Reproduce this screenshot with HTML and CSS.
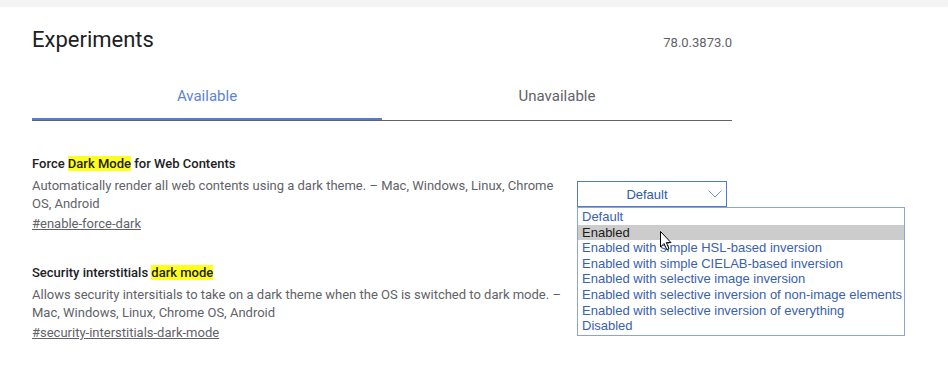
FILE: index.html
```html
<!DOCTYPE html>
<html lang="en">
<head>
  <meta charset="UTF-8" />
  <title>Experiments</title>
  <link rel="stylesheet" href="styles.css">
</head>
<body>
  <div class="top-bar"></div>
  <div class="content">
    <div class="title-row">
      <h1>Experiments</h1>
      <span class="version">78.0.3873.0</span>
    </div>
    <div class="tabs">
      <div class="tab active">Available</div>
      <div class="tab">Unavailable</div>
    </div>

    <div class="experiment first">
      <div class="experiment-text">
        <h2 class="experiment-name">Force <mark>Dark Mode</mark> for Web Contents</h2>
        <p class="description">Automatically render all web contents using a dark theme. – Mac, Windows, Linux, Chrome OS, Android</p>
        <a class="permalink" href="#enable-force-dark">#enable-force-dark</a>
      </div>
      <div class="experiment-control">
        <div class="select">
          <span class="select-value">Default</span>
          <svg class="chevron" width="14" height="8" viewBox="0 0 14 8">
            <path d="M0.5 0.5 L7 7 L13.5 0.5" fill="none" stroke="#7095d2" stroke-width="1"/>
          </svg>
        </div>
        <ul class="options">
          <li>Default</li>
          <li class="hover">Enabled</li>
          <li>Enabled with simple HSL-based inversion</li>
          <li>Enabled with simple CIELAB-based inversion</li>
          <li>Enabled with selective image inversion</li>
          <li>Enabled with selective inversion of non-image elements</li>
          <li>Enabled with selective inversion of everything</li>
          <li>Disabled</li>
        </ul>
        <svg class="cursor" width="13" height="20" viewBox="0 0 13 20">
          <path d="M0.5 0.5 L0.5 16 L4 12.5 L6.8 18.6 L9 17.6 L6.3 11.6 L11 11.6 Z" fill="#fff" stroke="#000" stroke-width="1" stroke-linejoin="round"/>
        </svg>
      </div>
    </div>

    <div class="experiment">
      <div class="experiment-text">
        <h2 class="experiment-name">Security interstitials <mark>dark mode</mark></h2>
        <p class="description">Allows security intersitials to take on a dark theme when the OS is switched to dark mode. – Mac, Windows, Linux, Chrome OS, Android</p>
        <a class="permalink" href="#security-interstitials-dark-mode">#security-interstitials-dark-mode</a>
      </div>
    </div>
  </div>
</body>
</html>
```

FILE: styles.css
```css
body {
  margin: 0;
  background: #fff;
  font-family: Roboto, "Liberation Sans", sans-serif;
  color: #202124;
}
.top-bar {
  height: 6px;
  background: #f4f4f4;
  box-shadow: 0 1px 2px rgba(0, 0, 0, 0.06);
}
.content {
  width: 700px;
  margin-left: 32px;
}
.title-row {
  display: flex;
  justify-content: space-between;
  align-items: baseline;
  margin-top: 20px;
}
h1 {
  margin: 0;
  font-size: 22px;
  font-weight: 400;
  line-height: 28px;
}
.version {
  font-size: 13px;
  color: #5f6368;
}
.tabs {
  display: flex;
  margin-top: 32px;
  border-bottom: 1px solid #646464;
}
.tab {
  flex: 1;
  text-align: center;
  font-size: 15px;
  line-height: 20px;
  padding-bottom: 14px;
  color: #5f6368;
}
.tab.active {
  color: #5b84d4;
  box-shadow: inset 0 -2px 0 #4f7ecb;
}
.experiment {
  display: flex;
  align-items: center;
  margin-top: 31px;
}
.experiment.first {
  margin-top: 34px;
}
.experiment-text {
  width: 530px;
}
.experiment-name {
  margin: 0 0 4px;
  font-size: 13px;
  font-weight: 500;
  line-height: 18px;
}
mark {
  background: #ffff1e;
  color: inherit;
}
.description {
  margin: 0;
  font-size: 13px;
  line-height: 18px;
  color: #5f6368;
}
.permalink {
  display: inline-block;
  font-size: 13px;
  line-height: 18px;
  color: #5f6368;
}
.experiment-control {
  position: relative;
  margin-left: 15px;
}
.select {
  box-sizing: border-box;
  width: 150px;
  height: 26px;
  border: 1px solid #4c7dcb;
  display: flex;
  align-items: center;
  font-family: "Liberation Sans", Arial, sans-serif;
  font-size: 13px;
  color: #2f5aab;
}
.select-value {
  flex: 1;
  text-align: center;
  padding-left: 8px;
}
.chevron {
  margin-right: 4px;
}
.options {
  position: absolute;
  top: 26px;
  left: 0;
  box-sizing: border-box;
  width: 328px;
  margin: 0;
  padding: 1px 0;
  list-style: none;
  background: #fff;
  border: 1px solid #8ba5d6;
  font-family: "Liberation Sans", Arial, sans-serif;
  font-size: 13px;
  line-height: 15.6px;
  color: #3a60b0;
}
.options li {
  padding-left: 4px;
  white-space: nowrap;
}
.options li.hover {
  background: #cccccc;
  color: #1a1a1a;
}
.cursor {
  position: absolute;
  top: 50px;
  left: 83px;
}
```
